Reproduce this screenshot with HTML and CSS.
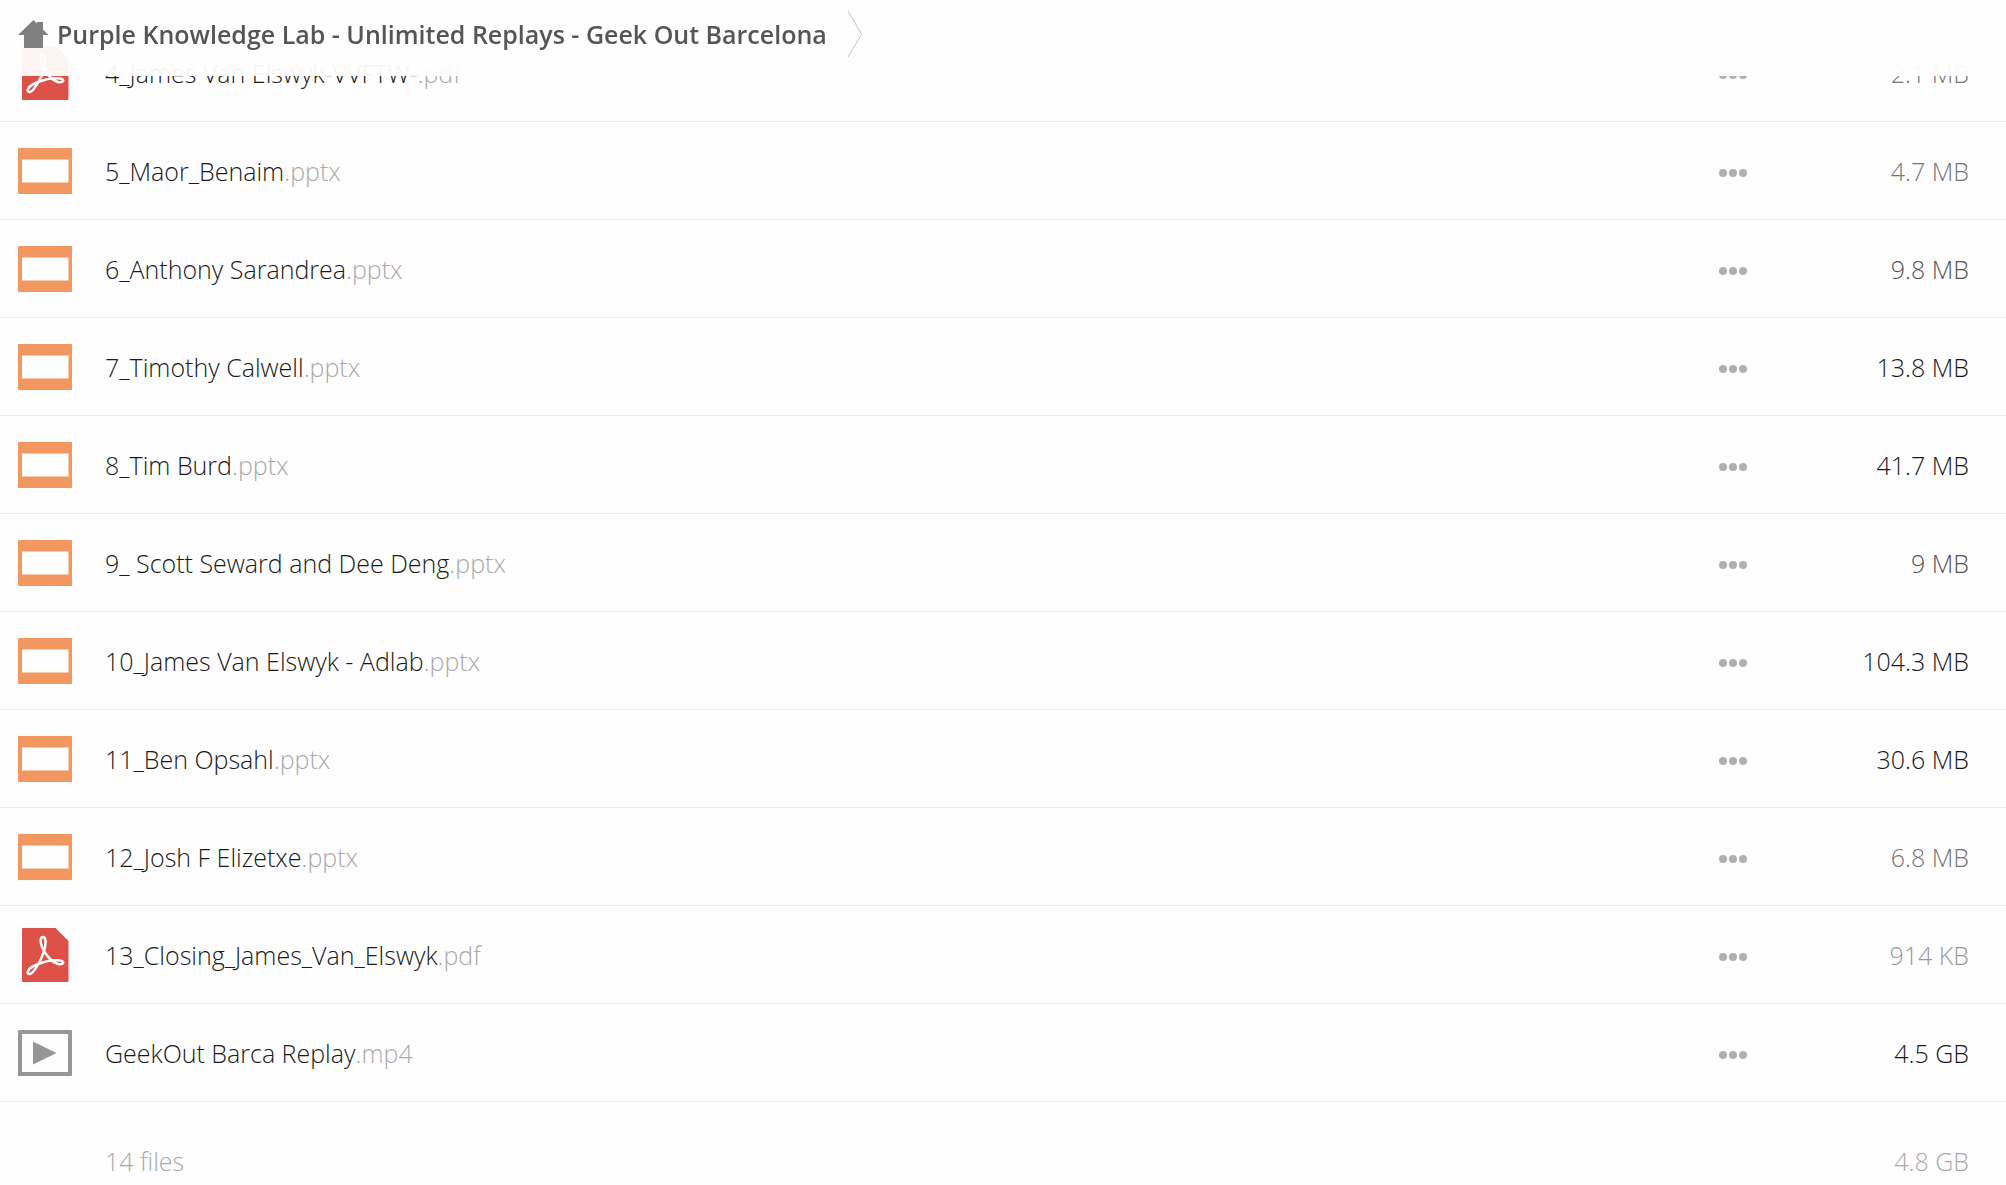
FILE: index.html
```
<!DOCTYPE html>
<html lang="en">
<head>
  <meta charset="utf-8">
  <title>Purple Knowledge Lab - Unlimited Replays - Geek Out Barcelona</title>
  <link rel="stylesheet" href="styles.css">
</head>
<body>
  <svg class="sprite" aria-hidden="true">
    <symbol id="icon-slides" viewBox="0 0 54 54">
      <path fill="#f1975f" fill-rule="evenodd" d="M1 4h52a1 1 0 0 1 1 1v44a1 1 0 0 1-1 1H1a1 1 0 0 1-1-1V5a1 1 0 0 1 1-1zM4 15.500v23h46.500v-23z"/>
    </symbol>
    <symbol id="icon-pdf" viewBox="0 0 54 54">
      <path fill="#dd5148" d="M5 0h32.500l13 13v40a1 1 0 0 1-1 1H5a1 1 0 0 1-1-1V1a1 1 0 0 1 1-1z"/>
      <path fill="none" stroke="#fff" stroke-width="2.500" stroke-linejoin="round" d="M25 9c-3 0-3 5-1 10 3 7 9 15 16 17 4 1 6-1 5-2-2-3-14-2-22 1-6 2-12 5-13 8-1 2 0 3 2 3 4-1 8-9 11-15 3-7 5-14 4.500-18-.3-3-1-4-2.500-4z"/>
    </symbol>
    <symbol id="icon-video" viewBox="0 0 54 54">
      <path fill="#969696" fill-rule="evenodd" d="M1 4h52a1 1 0 0 1 1 1v44a1 1 0 0 1-1 1H1a1 1 0 0 1-1-1V5a1 1 0 0 1 1-1zM4 8v38h46V8z"/>
      <path fill="#969696" d="M15 15.500 38.500 27 15 38.500z"/>
    </symbol>
    <symbol id="icon-more" viewBox="0 0 28 8">
      <g fill="#b0b0b0"><circle cx="4" cy="4" r="4"/><circle cx="14" cy="4" r="4"/><circle cx="24" cy="4" r="4"/></g>
    </symbol>
  </svg>

  <header class="topbar">
    <nav class="breadcrumb" aria-label="Breadcrumb">
      <a class="crumb" href="#">
        <svg class="home" viewBox="0 0 31 28" aria-hidden="true"><path fill="#808080" d="M15.500 0 19 3.500V2h6v7.500l5.500 5.500H25v13H6V15H0z"/></svg>
        <span>Purple Knowledge Lab - Unlimited Replays - Geek Out Barcelona</span>
      </a>
      <svg class="chevron" viewBox="0 0 16 46" aria-hidden="true"><path fill="none" stroke="#c4c4c4" d="M1 0 14.500 23 1 46"/></svg>
    </nav>
  </header>

  <main class="content">
    <table class="files">
      <tbody>
        <tr>
          <td class="type"><svg class="icon"><use href="#icon-pdf"/></svg></td>
          <td class="name">4_James Van Elswyk-VVFTW-<span class="ext">.pdf</span></td>
          <td class="actions"><button type="button" aria-label="More"><svg><use href="#icon-more"/></svg></button></td>
          <td class="size small">2.1 MB</td>
        </tr>
        <tr>
          <td class="type"><svg class="icon"><use href="#icon-slides"/></svg></td>
          <td class="name">5_Maor_Benaim<span class="ext">.pptx</span></td>
          <td class="actions"><button type="button" aria-label="More"><svg><use href="#icon-more"/></svg></button></td>
          <td class="size small">4.7 MB</td>
        </tr>
        <tr>
          <td class="type"><svg class="icon"><use href="#icon-slides"/></svg></td>
          <td class="name">6_Anthony Sarandrea<span class="ext">.pptx</span></td>
          <td class="actions"><button type="button" aria-label="More"><svg><use href="#icon-more"/></svg></button></td>
          <td class="size medium">9.8 MB</td>
        </tr>
        <tr>
          <td class="type"><svg class="icon"><use href="#icon-slides"/></svg></td>
          <td class="name">7_Timothy Calwell<span class="ext">.pptx</span></td>
          <td class="actions"><button type="button" aria-label="More"><svg><use href="#icon-more"/></svg></button></td>
          <td class="size">13.8 MB</td>
        </tr>
        <tr>
          <td class="type"><svg class="icon"><use href="#icon-slides"/></svg></td>
          <td class="name">8_Tim Burd<span class="ext">.pptx</span></td>
          <td class="actions"><button type="button" aria-label="More"><svg><use href="#icon-more"/></svg></button></td>
          <td class="size">41.7 MB</td>
        </tr>
        <tr>
          <td class="type"><svg class="icon"><use href="#icon-slides"/></svg></td>
          <td class="name">9_ Scott Seward and Dee Deng<span class="ext">.pptx</span></td>
          <td class="actions"><button type="button" aria-label="More"><svg><use href="#icon-more"/></svg></button></td>
          <td class="size medium">9 MB</td>
        </tr>
        <tr>
          <td class="type"><svg class="icon"><use href="#icon-slides"/></svg></td>
          <td class="name">10_James Van Elswyk - Adlab<span class="ext">.pptx</span></td>
          <td class="actions"><button type="button" aria-label="More"><svg><use href="#icon-more"/></svg></button></td>
          <td class="size">104.3 MB</td>
        </tr>
        <tr>
          <td class="type"><svg class="icon"><use href="#icon-slides"/></svg></td>
          <td class="name">11_Ben Opsahl<span class="ext">.pptx</span></td>
          <td class="actions"><button type="button" aria-label="More"><svg><use href="#icon-more"/></svg></button></td>
          <td class="size">30.6 MB</td>
        </tr>
        <tr>
          <td class="type"><svg class="icon"><use href="#icon-slides"/></svg></td>
          <td class="name">12_Josh F Elizetxe<span class="ext">.pptx</span></td>
          <td class="actions"><button type="button" aria-label="More"><svg><use href="#icon-more"/></svg></button></td>
          <td class="size small">6.8 MB</td>
        </tr>
        <tr>
          <td class="type"><svg class="icon"><use href="#icon-pdf"/></svg></td>
          <td class="name">13_Closing_James_Van_Elswyk<span class="ext">.pdf</span></td>
          <td class="actions"><button type="button" aria-label="More"><svg><use href="#icon-more"/></svg></button></td>
          <td class="size tiny">914 KB</td>
        </tr>
        <tr>
          <td class="type"><svg class="icon"><use href="#icon-video"/></svg></td>
          <td class="name">GeekOut Barca Replay<span class="ext">.mp4</span></td>
          <td class="actions"><button type="button" aria-label="More"><svg><use href="#icon-more"/></svg></button></td>
          <td class="size">4.5 GB</td>
        </tr>
      </tbody>
      <tfoot>
        <tr>
          <td class="type"></td>
          <td class="name">14 files</td>
          <td class="actions"></td>
          <td class="size">4.8 GB</td>
        </tr>
      </tfoot>
    </table>
  </main>
</body>
</html>
```
FILE: styles.css
```
* {
  box-sizing: border-box;
}
body {
  margin: 0;
  background: #fefefe;
  color: #1a1a1a;
  font: 300 25px/36px "Open Sans", sans-serif;
}
.sprite {
  display: none;
}

/* breadcrumb bar, stays over the list while it scrolls */
.topbar {
  position: fixed;
  top: 0; left: 0; right: 0;
  z-index: 1;
  height: 76px;
  padding: 11px 18px;
  background: rgba(254, 254, 254, .95);
}
.breadcrumb {
  display: flex;
  align-items: flex-start;
  gap: 20px;
}
.crumb {
  display: flex;
  align-items: center;
  gap: 8px;
  padding-top: 5px;
  color: #555;
  font-weight: 600;
  text-decoration: none;
}
.home {
  width: 31px; height: 28px;
}
.chevron {
  width: 16px; height: 46px;
}

.content {
  padding-top: 23px;
}
.files {
  width: 100%;
  border-collapse: collapse;
  table-layout: fixed;
}
.files td {
  height: 98px;
  padding: 0;
  border-top: 1px solid #ececec;
}
.files .type {
  width: 105px;
  padding-left: 18px;
}
.files .actions {
  width: 127px;
}
.files .size {
  width: 160px;
  padding-right: 37px;
  text-align: right;
  white-space: nowrap;
}
.icon {
  display: block;
  width: 54px; height: 54px;
}
.ext {
  color: #aaa;
}
.actions button {
  display: block;
  padding: 5px 0 0;
  border: 0;
  background: none;
  cursor: pointer;
}
.actions svg {
  display: block;
  width: 28px; height: 8px;
}

/* the smaller the file, the paler its size */
.size.medium { color: #555; }
.size.small { color: #777; }
.size.tiny { color: #999; }

.files tfoot td {
  height: 118px;
  color: #aaa;
}
```
